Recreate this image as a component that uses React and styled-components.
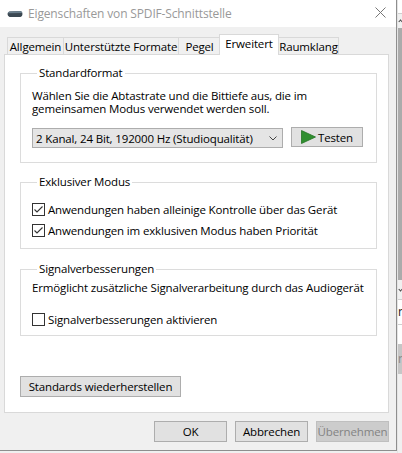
import React from "react";
import styled, { createGlobalStyle } from "styled-components";

const FONT = `"Open Sans", "Noto Sans", "Liberation Sans", sans-serif`;

const GlobalStyle = createGlobalStyle`
  html, body { margin: 0; padding: 0; background: #f0f0f0; }
  * { box-sizing: border-box; }
`;

const Screen = styled.div`
  width: 402px;
  height: 453px;
  display: flex;
  overflow: hidden;
  background: #f0f0f0;
  font-family: ${FONT};
  font-size: 11.5px;
  letter-spacing: -0.15px;
  color: #000;
`;

const Dialog = styled.div`
  width: 397px;
  height: 451px;
  flex: none;
  display: flex;
  flex-direction: column;
  background: #f0f0f0;
  border-right: 1px solid #8e8e8e;
  border-bottom: 1px solid #8e8e8e;
`;

const TitleBar = styled.div`
  height: 27px;
  flex: none;
  background: #fff;
  display: flex;
  align-items: center;
  padding: 0 10px 0 7px;
`;

const TitleIcon = styled.svg`
  flex: none;
  margin-right: 5px;
`;

const TitleText = styled.span`
  flex: 1;
  color: #999;
  font-size: 12px;
  line-height: 16px;
`;

const CloseIcon = styled.svg`
  flex: none;
  margin-top: -3px;
`;

const Body = styled.div`
  flex: 1;
  display: flex;
  flex-direction: column;
  padding: 7px 7px 0 4px;
`;

const TabRow = styled.div`
  display: flex;
  align-items: flex-end;
  height: 21px;
  margin: 0 0 -1px 3px;
  position: relative;
  z-index: 1;
`;

const Tab = styled.div`
  width: ${(p) => p.$w}px;
  height: ${(p) => (p.$active ? 21 : 17)}px;
  margin-left: ${(p) => p.$ml}px;
  margin-bottom: ${(p) => (p.$active ? 0 : 1)}px;
  border: 1px solid #d9d9d9;
  border-bottom: none;
  background: ${(p) => (p.$active ? "#fff" : "#f0f0f0")};
  display: flex;
  justify-content: center;
  align-items: ${(p) => (p.$active ? "flex-start" : "center")};
  padding-top: ${(p) => (p.$active ? 1 : 0)}px;
  line-height: 15px;
  white-space: nowrap;
  position: relative;
  z-index: ${(p) => (p.$active ? 2 : 1)};
`;

const Panel = styled.div`
  height: 359px;
  flex: none;
  background: #fff;
  border: 1px solid #d9d9d9;
  padding: 10px 11px 0 15px;
  display: flex;
  flex-direction: column;
  align-items: stretch;
`;

const Group = styled.fieldset`
  margin: 0 0 ${(p) => p.$mb || 0}px;
  padding: ${(p) => p.$pad};
  border: 1px solid #dcdcdc;
  min-width: 0;
`;

const Legend = styled.legend`
  margin-left: 5px;
  padding: 0 2px;
  line-height: 16px;
`;

const Text = styled.p`
  margin: 0;
  line-height: 13px;
  white-space: nowrap;
`;

const FormatRow = styled.div`
  display: flex;
  align-items: flex-start;
  gap: 8px;
  margin-top: 12px;
`;

const Combo = styled.div`
  width: 251px;
  height: 20px;
  margin-top: 1px;
  background: #e5e5e5;
  border: 1px solid #adadad;
  display: flex;
  align-items: center;
  justify-content: space-between;
  padding: 0 5px 0 3px;
  white-space: nowrap;
`;

const Button = styled.button`
  width: ${(p) => p.$w}px;
  height: ${(p) => p.$h || 21}px;
  flex: none;
  margin: 0;
  padding: 0;
  font: inherit;
  letter-spacing: inherit;
  color: ${(p) => (p.disabled ? "#838383" : "#000")};
  background: ${(p) => (p.disabled ? "#cccccc" : "#e1e1e1")};
  border: 1px solid ${(p) => (p.disabled ? "#bfbfbf" : "#adadad")};
  display: flex;
  align-items: center;
  justify-content: center;
  gap: 2px;
  white-space: nowrap;
`;

const CheckRow = styled.label`
  display: flex;
  align-items: center;
  gap: 3px;
  height: 21px;
  margin-top: ${(p) => p.$mt || 0}px;
  white-space: nowrap;
`;

const Box = styled.span`
  width: 13px;
  height: 13px;
  flex: none;
  border: 1px solid #333;
  background: #fff;
  display: flex;
  align-items: center;
  justify-content: center;
`;

const ResetRow = styled.div`
  display: flex;
  margin-top: 40px;
`;

const Footer = styled.div`
  display: flex;
  justify-content: flex-end;
  gap: 8px;
  margin-top: 8px;
`;

const Strip = styled.div`
  flex: 1;
  height: 453px;
  display: flex;
  flex-direction: column;
  overflow: hidden;
  border-left: 1px solid #e4e4e4;
`;

const Seg = styled.div`
  height: ${(p) => p.$h}px;
  flex: none;
  background: ${(p) => p.$bg};
  border-bottom: ${(p) => (p.$line ? "1px solid #cfcfcf" : "none")};
  display: flex;
  align-items: center;
  overflow: hidden;
  font-size: 12px;
  color: ${(p) => p.$color || "#222"};
  line-height: 12px;
`;

const Glyph = styled.span`
  width: 3px;
  height: 3px;
  margin-left: 1px;
  border-top: 1px solid #444;
  border-left: 1px solid #444;
  transform: rotate(${(p) => p.$rot}deg);
`;

const Check = () => (
  <svg width="11" height="11" viewBox="0 0 11 11">
    <polyline points="1.5,5.5 4,8 9.5,2.5" fill="none" stroke="#333" strokeWidth="1.1" />
  </svg>
);

const CheckBox = ({ checked, label, mt }) => (
  <CheckRow $mt={mt}>
    <Box>{checked && <Check />}</Box>
    <span>{label}</span>
  </CheckRow>
);

export default function App() {
  return (
    <Screen>
      <GlobalStyle />
      <Dialog>
        <TitleBar>
          <TitleIcon width="16" height="8" viewBox="0 0 16 8">
            <path d="M2.5 1.5 L13.5 1 Q15.5 1.5 15.5 4 Q15.5 6.5 13.5 7 L2.5 7 Q0.5 6 0.5 4 Q0.5 2 2.5 1.5 Z" fill="#3b4852" />
            <path d="M2.5 1.5 L13.5 1 Q15 1.3 15.3 3 L0.8 3.2 Q1.2 1.8 2.5 1.5 Z" fill="#6b7f8d" />
          </TitleIcon>
          <TitleText>Eigenschaften von SPDIF-Schnittstelle</TitleText>
          <CloseIcon width="11" height="11" viewBox="0 0 11 11">
            <path d="M0.5 0.5 L10.5 10.5 M10.5 0.5 L0.5 10.5" stroke="#777" strokeWidth="1" />
          </CloseIcon>
        </TitleBar>
        <Body>
          <TabRow>
            <Tab $w={57} $ml={0}>Allgemein</Tab>
            <Tab $w={116} $ml={-1}>Unterstützte Formate</Tab>
            <Tab $w={43} $ml={-1}>Pegel</Tab>
            <Tab $w={60} $ml={-2} $active>Erweitert</Tab>
            <Tab $w={61} $ml={-1}>Raumklang</Tab>
          </TabRow>
          <Panel>
            <Group $mb={11} $pad="8px 12px 14px 11px">
              <Legend>Standardformat</Legend>
              <Text>
                Wählen Sie die Abtastrate und die Bittiefe aus, die im
                <br />
                gemeinsamen Modus verwendet werden soll.
              </Text>
              <FormatRow>
                <Combo>
                  <span>2 Kanal, 24 Bit, 192000 Hz (Studioqualität)</span>
                  <svg width="8" height="5" viewBox="0 0 8 5">
                    <polyline points="0.5,0.5 4,4 7.5,0.5" fill="none" stroke="#444" strokeWidth="1" />
                  </svg>
                </Combo>
                <Button $w={72} $h={20}>
                  <svg width="15" height="14" viewBox="0 0 15 14">
                    <polygon points="0.5,0.5 14.5,7 0.5,13.5" fill="#2f8f2f" stroke="#237323" strokeWidth="0.8" />
                  </svg>
                  Testen
                </Button>
              </FormatRow>
            </Group>
            <Group $mb={12} $pad="9px 12px 7px 11px">
              <Legend>Exklusiver Modus</Legend>
              <CheckBox checked label="Anwendungen haben alleinige Kontrolle über das Gerät" />
              <CheckBox checked label="Anwendungen im exklusiven Modus haben Priorität" />
            </Group>
            <Group $pad="4px 12px 5px 11px">
              <Legend>Signalverbesserungen</Legend>
              <Text>Ermöglicht zusätzliche Signalverarbeitung durch das Audiogerät</Text>
              <CheckBox mt={15} label="Signalverbesserungen aktivieren" />
            </Group>
            <ResetRow>
              <Button $w={161}>Standards wiederherstellen</Button>
            </ResetRow>
          </Panel>
          <Footer>
            <Button $w={73}>OK</Button>
            <Button $w={73}>Abbrechen</Button>
            <Button $w={73} disabled>Übernehmen</Button>
          </Footer>
        </Body>
      </Dialog>
      <Strip>
        <Seg $h={14} $bg="#ffffff" $line />
        <Seg $h={14} $bg="#f0f0f0">
          <Glyph $rot={45} />
        </Seg>
        <Seg $h={252} $bg="#ababab" />
        <Seg $h={20} $bg="#f0f0f0" $line>
          <Glyph $rot={225} />
        </Seg>
        <Seg $h={25} $bg="#ffffff" $line>n</Seg>
        <Seg $h={19} $bg="#ffffff" />
        <Seg $h={30} $bg="#c6c6c6" $color="#888">n</Seg>
        <Seg $h={79} $bg="#f0f0f0" />
      </Strip>
    </Screen>
  );
}
